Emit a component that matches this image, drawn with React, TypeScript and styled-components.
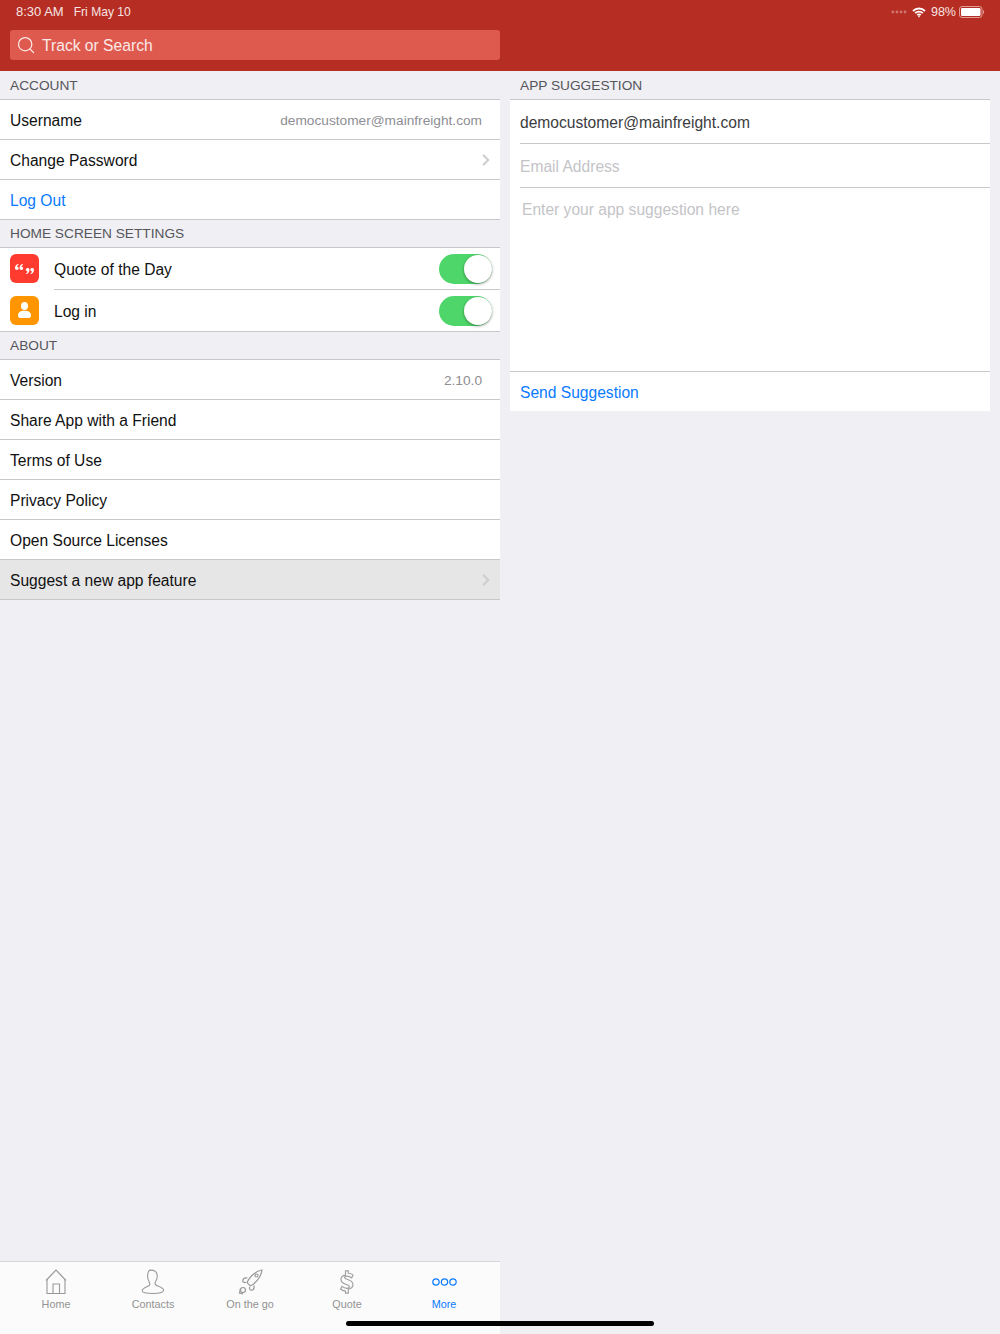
import styled, { createGlobalStyle } from 'styled-components';
import { ChevronRight, Search } from 'lucide-react';
import type { ReactNode } from 'react';

const GlobalStyle = createGlobalStyle`
  html, body {
    margin: 0;
    padding: 0;
    background: #efeff4;
    font-family: "Liberation Sans", Arial, sans-serif;
  }
`;

const Page = styled.div`
  width: 1000px;
  height: 1334px;
  display: flex;
  flex-direction: column;
  overflow: hidden;
  position: relative;
`;

const TopBar = styled.div`
  height: 71px;
  flex: none;
  background: #b52d23;
  box-sizing: border-box;
  padding: 0 10px;
`;

const StatusBar = styled.div`
  height: 30px;
  display: flex;
  align-items: center;
  justify-content: space-between;
  color: #f8e4e2;
  padding: 0 5px 6px 6px;
  box-sizing: border-box;
`;

const StatusLeft = styled.div`
  display: flex;
  align-items: baseline;
  gap: 10px;
  margin-top: -1px;
`;

const StatusTime = styled.span`
  font-size: 13px;
`;

const StatusDate = styled.span`
  font-size: 12.1px;
`;

const StatusRight = styled.div`
  display: flex;
  align-items: center;
  gap: 5px;
  font-size: 12.5px;
`;

const BatteryLevel = styled.span`
  margin-right: -2px;
`;

const SearchBox = styled.div`
  width: 490px;
  height: 30px;
  background: #de5a4e;
  border-radius: 3px;
  display: flex;
  align-items: center;
  gap: 6px;
  padding-left: 6px;
  box-sizing: border-box;
  color: #fbe9e7;
  font-size: 15.65px;
`;

const SearchLabel = styled.span`
  padding-top: 2px;
`;

const Columns = styled.div`
  flex: 1;
  display: grid;
  grid-template-columns: 500px 480px;
  gap: 10px;
  min-height: 0;
`;

const LeftColumn = styled.div`
  display: flex;
  flex-direction: column;
`;

const RightColumn = styled.div`
  display: flex;
  flex-direction: column;
`;

const SectionHeader = styled.div`
  height: 28px;
  box-sizing: border-box;
  padding: 6px 0 0 10px;
  color: #55555a;
  font-size: 13.7px;
  line-height: 16px;
  border-bottom: 1px solid #c8c8cc;
`;

const TopHeader = styled(SectionHeader)`
  height: 29px;
  padding-top: 7px;
`;

const Group = styled.div`
  background: #fff;
`;

const Row = styled.div<{ $selected?: boolean }>`
  height: 40px;
  box-sizing: border-box;
  display: flex;
  align-items: center;
  padding-left: 10px;
  background: ${(p) => (p.$selected ? '#e6e6e6' : 'transparent')};
  border-bottom: 1px solid #c8c8cc;
  font-size: 15.6px;
  color: #111;
`;

const RowLabel = styled.span<{ $link?: boolean }>`
  flex: 1;
  padding-top: 2px;
  color: ${(p) => (p.$link ? '#0a7aff' : '#111')};
`;

const RowValue = styled.span`
  color: #8e8e93;
  font-size: 13.7px;
  margin-right: 18px;
  padding-top: 2px;
`;

const RowChevron = styled(ChevronRight)`
  color: #cfcfd2;
  margin-right: 5px;
`;

const SettingRow = styled.div<{ $last?: boolean }>`
  height: 42px;
  box-sizing: border-box;
  display: flex;
  align-items: center;
  padding-left: 10px;
  gap: 15px;
  border-bottom: ${(p) => (p.$last ? '1px solid #c8c8cc' : 'none')};
`;

const SettingBody = styled.div<{ $last?: boolean }>`
  flex: 1;
  height: 100%;
  display: flex;
  align-items: center;
  font-size: 15.6px;
  color: #111;
  padding-right: 8px;
  box-sizing: border-box;
  border-bottom: ${(p) => (p.$last ? 'none' : '1px solid #c8c8cc')};
`;

const SettingLabel = styled.span`
  padding-top: 2px;
`;

const IconTile = styled.div<{ $color: string }>`
  width: 29px;
  height: 29px;
  flex: none;
  margin-top: -1px;
  border-radius: 6px;
  background: ${(p) => p.$color};
  display: flex;
  align-items: center;
  justify-content: center;
`;

const Toggle = styled.div`
  width: 53px;
  height: 30px;
  margin-left: auto;
  border-radius: 15px;
  background: #4fd66a;
  position: relative;
`;

const Knob = styled.div`
  position: absolute;
  top: 1px;
  right: 0;
  width: 28px;
  height: 28px;
  border-radius: 50%;
  background: #fff;
  box-shadow: 0 1px 3px rgba(0, 0, 0, 0.4);
`;

const FormGroup = styled.div`
  background: #fff;
`;

const FormRow = styled.div<{ $placeholder?: boolean }>`
  height: 44px;
  box-sizing: border-box;
  display: flex;
  align-items: center;
  margin-left: 10px;
  padding-top: 2px;
  border-bottom: 1px solid #c8c8cc;
  font-size: 15.6px;
  color: ${(p) => (p.$placeholder ? '#c4c4c8' : '#3c3c40')};
`;

const TextArea = styled.div`
  height: 184px;
  box-sizing: border-box;
  padding: 13px 0 0 12px;
  font-size: 15.6px;
  color: #c4c4c8;
  border-bottom: 1px solid #c8c8cc;
`;

const SendRow = styled.div`
  height: 39px;
  box-sizing: border-box;
  display: flex;
  align-items: center;
  padding: 2px 0 0 10px;
  font-size: 15.6px;
  color: #0a7aff;
`;

const TabBar = styled.div`
  margin-top: auto;
  height: 73px;
  flex: none;
  box-sizing: border-box;
  border-top: 1px solid #d6d6da;
  background: #fbfbfb;
  padding: 0 7.5px;
  display: grid;
  grid-template-columns: repeat(5, 97px);
`;

const Tab = styled.div<{ $active?: boolean }>`
  display: flex;
  flex-direction: column;
  align-items: center;
  padding-top: 6px;
  color: ${(p) => (p.$active ? '#0a7aff' : '#929292')};
  font-size: 10.8px;
`;

const TabIcon = styled.div`
  height: 27px;
  margin-bottom: 3px;
  display: flex;
  align-items: center;
  justify-content: center;
`;

const HomeIndicator = styled.div`
  position: absolute;
  left: 346px;
  bottom: 8px;
  width: 308px;
  height: 5px;
  border-radius: 3px;
  background: #000;
`;

const Wifi = () => (
  <svg width="14" height="11" viewBox="0 0 14 11" fill="none" stroke="#fff" strokeWidth="1.9">
    <path d="M1 4a8.6 8.6 0 0 1 12 0" />
    <path d="M3.2 6.2a5.4 5.4 0 0 1 7.6 0" />
    <path d="M5.3 8.2a2.4 2.4 0 0 1 3.4 0" />
    <circle cx="7" cy="9.6" r="0.8" fill="#fff" stroke="none" />
  </svg>
);

const Cellular = () => (
  <svg width="16" height="4" viewBox="0 0 17 4" fill="#d0766e">
    <circle cx="2" cy="2" r="1.5" />
    <circle cx="6.3" cy="2" r="1.5" />
    <circle cx="10.6" cy="2" r="1.5" />
    <circle cx="14.9" cy="2" r="1.5" />
  </svg>
);

const Battery = () => (
  <svg width="26" height="12" viewBox="0 0 26 12">
    <rect x="0.5" y="0.5" width="22.5" height="11" rx="2.5" fill="none" stroke="#e29a94" />
    <rect x="2" y="2" width="19.5" height="8" rx="1.2" fill="#fff" />
    <path d="M24 4v4a2 2 0 0 0 1.2-2 2 2 0 0 0-1.2-2z" fill="#e29a94" />
  </svg>
);

const QuoteGlyph = () => (
  <svg width="19" height="10" viewBox="0 0 19 10" fill="#fff">
    <path d="M0 4.300C0 2.200 1.100.500 3.200 0l.4.700C2.500 1.300 2 2 2 2.800c1 0 1.700.6 1.700 1.500S2.900 6 1.900 6 0 5.400 0 4.300z" />
    <path d="M4.500 4.300c0-2.100 1.100-3.800 3.200-4.300l.4.700C7 1.300 6.500 2 6.500 2.800c1 0 1.700.6 1.700 1.500S7.400 6 6.400 6 4.500 5.400 4.500 4.300z" />
    <path d="M14.500 5.700c0 2.100-1.100 3.800-3.200 4.300l-.4-.7c1.100-.6 1.600-1.300 1.600-2.100-1 0-1.700-.6-1.700-1.500S11.600 4 12.600 4s1.900.6 1.900 1.700z" />
    <path d="M19 5.700c0 2.100-1.100 3.800-3.200 4.300l-.4-.7c1.100-.6 1.600-1.300 1.600-2.100-1 0-1.700-.6-1.700-1.500S16.100 4 17.100 4 19 4.600 19 5.700z" />
  </svg>
);

const PersonGlyph = () => (
  <svg width="13" height="16" viewBox="0 0 13 16" fill="#fff">
    <ellipse cx="6.500" cy="4" rx="3.500" ry="4" />
    <path d="M0 13.500C0 10.200 2.800 8.800 6.500 8.800s6.500 1.400 6.500 4.700c0 1.600-.8 2.500-2.300 2.500H2.300C.8 16 0 15.100 0 13.500z" />
  </svg>
);

const HomeIcon = () => (
  <svg width="22" height="26" viewBox="0 0 22 26" fill="none" stroke="#999" strokeWidth="1.100">
    <path d="M1 11.500L11 1l10 10.500" />
    <path d="M2 10.500V24.500h18V10.500" />
    <path d="M8 24.500V15h6.500v9.500" />
  </svg>
);

const ContactsIcon = () => (
  <svg width="24" height="26" viewBox="0 0 24 26" fill="none" stroke="#999" strokeWidth="1.100">
    <path d="M9 1.500c3-1 6 .5 6.800 2.800.8 2.500.3 6-1.300 8.500-.7 1.200-.5 2.700.8 3.500 2 1.200 6.700 2 7.300 4.700.4 2-3 3.500-10.500 3.500S1 23.500 1.200 21.500c.4-2.500 4.600-3.300 6.600-4.800 1.200-.9 1.300-2 .6-3.200-1.400-2.500-2.300-5.500-1.600-8.700.3-1.600.7-3.200 2.200-3.800z" />
  </svg>
);

const RocketIcon = () => (
  <svg width="25" height="26" viewBox="0 0 25 26" fill="none" stroke="#999" strokeWidth="1.200">
    <path d="M24 1c-.6 5-3.500 10-9 14.500l-2.700 1.300-3.200-3.200 1.300-2.700C14.500 5 19 1.800 24 1z" />
    <path d="M9.500 9c-2.200-.4-4.300.6-4.700 2.400-.3 1.500 1.200 2.500 3.400 1.900" />
    <path d="M16 16.500c.4 2.200-.6 4.300-2.400 4.700-1.500.3-2.500-1.200-1.900-3.400" />
    <circle cx="18.500" cy="6.500" r="1.500" />
    <circle cx="5" cy="21" r="2.500" />
    <path d="M2.500 19.500L1.500 24l3.500.8" />
  </svg>
);

const DollarIcon = () => (
  <svg width="16" height="24" viewBox="0 0 16 27" fill="none" stroke="#a0a0a0" strokeWidth="1.300">
    <path d="M6.300 1h3.200v2.600c2.600.3 4.800 1.400 5.300 2.200l-1.500 3c-1.700-1.200-3.400-1.900-5.300-1.900-1.700 0-2.600.6-2.600 1.500 0 1 1.100 1.500 4 2.500 3.400 1.100 5.300 2.700 5.300 5.500 0 2.700-2 4.700-5.200 5.200V26H6.300v-2.300c-2.400-.2-4.500-1.200-5.600-2.300l1.600-3c1.600 1.300 3.600 2.200 5.600 2.200 1.700 0 2.800-.7 2.800-1.800 0-1-1-1.700-3.500-2.500C3.500 15.200 1.200 13.800 1.200 10.800c0-2.600 1.900-4.600 5.100-5.100z" />
  </svg>
);

const MoreIcon = () => (
  <svg width="25" height="8" viewBox="0 0 25 8" fill="none" stroke="#0a7aff" strokeWidth="1.200">
    <circle cx="4" cy="4" r="3.200" />
    <circle cx="12.500" cy="4" r="3.200" />
    <circle cx="21" cy="4" r="3.200" />
  </svg>
);

const tabs: { label: string; icon: ReactNode; active?: boolean }[] = [
  { label: 'Home', icon: <HomeIcon /> },
  { label: 'Contacts', icon: <ContactsIcon /> },
  { label: 'On the go', icon: <RocketIcon /> },
  { label: 'Quote', icon: <DollarIcon /> },
  { label: 'More', icon: <MoreIcon />, active: true },
];

const aboutRows = ['Share App with a Friend', 'Terms of Use', 'Privacy Policy', 'Open Source Licenses'];

const App = () => (
  <Page>
    <GlobalStyle />
    <TopBar>
      <StatusBar>
        <StatusLeft>
          <StatusTime>8:30 AM</StatusTime>
          <StatusDate>Fri May 10</StatusDate>
        </StatusLeft>
        <StatusRight>
          <Cellular />
          <Wifi />
          <BatteryLevel>98%</BatteryLevel>
          <Battery />
        </StatusRight>
      </StatusBar>
      <SearchBox>
        <Search size={20} strokeWidth={1.5} color="#fbe9e7" />
        <SearchLabel>Track or Search</SearchLabel>
      </SearchBox>
    </TopBar>

    <Columns>
      <LeftColumn>
        <TopHeader>ACCOUNT</TopHeader>
        <Group>
          <Row>
            <RowLabel>Username</RowLabel>
            <RowValue>democustomer@mainfreight.com</RowValue>
          </Row>
          <Row>
            <RowLabel>Change Password</RowLabel>
            <RowChevron size={18} strokeWidth={3} />
          </Row>
          <Row>
            <RowLabel $link>Log Out</RowLabel>
          </Row>
        </Group>

        <SectionHeader>HOME SCREEN SETTINGS</SectionHeader>
        <Group>
          <SettingRow>
            <IconTile $color="#ff3b30"><QuoteGlyph /></IconTile>
            <SettingBody>
              <SettingLabel>Quote of the Day</SettingLabel>
              <Toggle><Knob /></Toggle>
            </SettingBody>
          </SettingRow>
          <SettingRow $last>
            <IconTile $color="#ff9500"><PersonGlyph /></IconTile>
            <SettingBody $last>
              <SettingLabel>Log in</SettingLabel>
              <Toggle><Knob /></Toggle>
            </SettingBody>
          </SettingRow>
        </Group>

        <SectionHeader>ABOUT</SectionHeader>
        <Group>
          <Row>
            <RowLabel>Version</RowLabel>
            <RowValue>2.10.0</RowValue>
          </Row>
          {aboutRows.map((label) => (
            <Row key={label}>
              <RowLabel>{label}</RowLabel>
            </Row>
          ))}
          <Row $selected>
            <RowLabel>Suggest a new app feature</RowLabel>
            <RowChevron size={18} strokeWidth={3} />
          </Row>
        </Group>

        <TabBar>
          {tabs.map((tab) => (
            <Tab key={tab.label} $active={tab.active}>
              <TabIcon>{tab.icon}</TabIcon>
              {tab.label}
            </Tab>
          ))}
        </TabBar>
      </LeftColumn>

      <RightColumn>
        <TopHeader>APP SUGGESTION</TopHeader>
        <FormGroup>
          <FormRow>democustomer@mainfreight.com</FormRow>
          <FormRow $placeholder>Email Address</FormRow>
          <TextArea>Enter your app suggestion here</TextArea>
          <SendRow>Send Suggestion</SendRow>
        </FormGroup>
      </RightColumn>
    </Columns>
    <HomeIndicator />
  </Page>
);

export default App;
